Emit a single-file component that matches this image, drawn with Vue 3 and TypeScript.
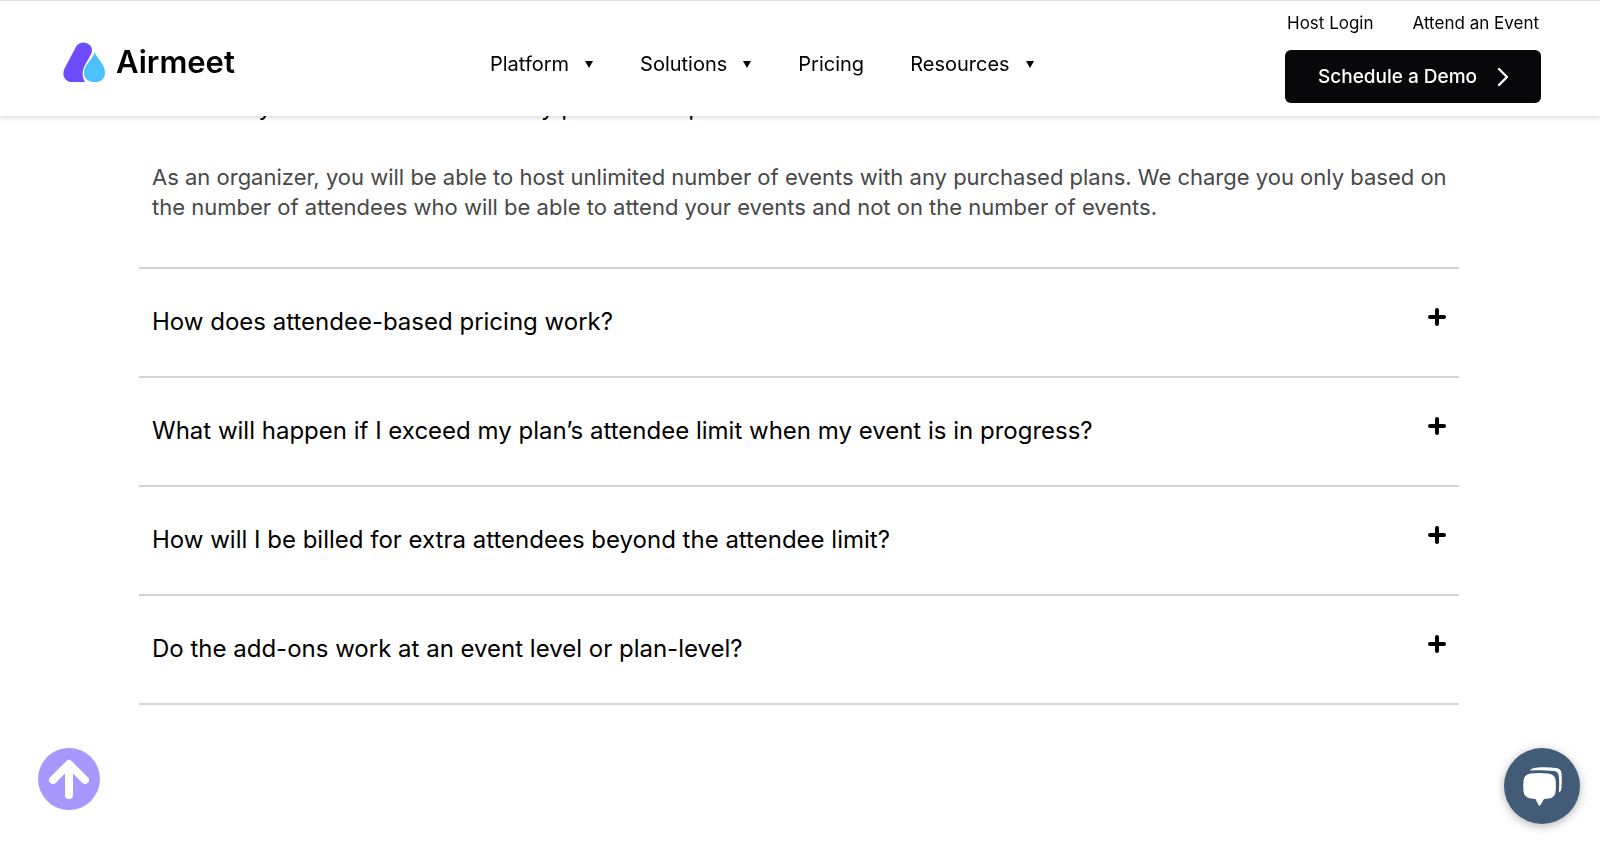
<script setup lang="ts">
import { ref } from 'vue'

interface NavItem { label: string; menu: boolean }
interface Faq { id: string; question: string; answer: string }

const nav: NavItem[] = [
  { label: 'Platform', menu: true },
  { label: 'Solutions', menu: true },
  { label: 'Pricing', menu: false },
  { label: 'Resources', menu: true },
]

const faqs: Faq[] = [
  {
    id: 'events',
    question: 'How many events can I run with my purchased plan?',
    answer:
      'As an organizer, you will be able to host unlimited number of events with any purchased plans. We charge you only based on the number of attendees who will be able to attend your events and not on the number of events.',
  },
  { id: 'pricing', question: 'How does attendee-based pricing work?', answer: '' },
  { id: 'exceed', question: 'What will happen if I exceed my plan’s attendee limit when my event is in progress?', answer: '' },
  { id: 'billing', question: 'How will I be billed for extra attendees beyond the attendee limit?', answer: '' },
  { id: 'addons', question: 'Do the add-ons work at an event level or plan-level?', answer: '' },
]

const openId = ref<string>('events')

function toggle(faq: Faq): void {
  if (faq.answer) openId.value = openId.value === faq.id ? '' : faq.id
}

function scrollToTop(): void {
  window.scrollTo({ top: 0, behavior: 'smooth' })
}
</script>

<template>
  <div class="page">
    <header class="header">
      <a class="brand" href="#" aria-label="Airmeet">
        <svg class="mark" viewBox="0 0 44 42" aria-hidden="true">
          <path
            d="M13.5 4.6C16 .6 20.5-.5 24.500 1.200C29.500 3.500 31 8.500 28.600 12.600L22 24.500C19.300 29.800 19.500 36 22.500 41H9.500C1.500 41-1.800 33.500 1.800 26.600Z"
            fill="#6d4cff"
          />
          <path
            d="M32.500 10.500C34.500 16.500 43 23 43 31.200C43 37.500 39 41 32.500 41C25.500 41 21.500 37.300 21.500 31.200C21.500 23.500 30 18 32.500 10.500Z"
            fill="#4dc0ff"
          />
        </svg>
        <span class="brand-name">Airmeet</span>
      </a>

      <nav class="nav" aria-label="Main">
        <a v-for="item in nav" :key="item.label" class="nav-link" href="#">
          {{ item.label }}
          <svg v-if="item.menu" class="caret" viewBox="0 0 10 8" aria-hidden="true">
            <path d="M1 1H9L5 8Z" fill="#000" />
          </svg>
        </a>
      </nav>

      <div class="actions">
        <div class="account">
          <a href="#">Host Login</a>
          <a href="#">Attend an Event</a>
        </div>
        <a class="demo" href="#">
          Schedule a Demo
          <svg class="chevron" viewBox="0 0 12 20" aria-hidden="true">
            <path d="M2 2L10 10L2 18" fill="none" stroke="#fff" stroke-width="2.400" stroke-linecap="round" stroke-linejoin="round" />
          </svg>
        </a>
      </div>
    </header>

    <main class="faqs">
      <section v-for="faq in faqs" :key="faq.id" class="faq">
        <h3 class="heading">
          <button
            class="question"
            type="button"
            :aria-expanded="openId === faq.id"
            @click="toggle(faq)"
          >
            <span>{{ faq.question }}</span>
            <svg v-if="openId !== faq.id" class="plus" viewBox="0 0 18 18" aria-hidden="true">
              <path d="M9 2V16M2 9H16" stroke="#000" stroke-width="4" stroke-linecap="round" />
            </svg>
          </button>
        </h3>
        <p v-if="openId === faq.id" class="answer">{{ faq.answer }}</p>
      </section>
    </main>

    <button class="to-top" type="button" aria-label="Back to top" @click="scrollToTop">
      <svg viewBox="0 0 62 62" aria-hidden="true">
        <circle cx="31" cy="31" r="31" fill="#a797ff" />
        <path d="M31 47V17M15 32L31 16L47 32" fill="none" stroke="#fff" stroke-width="8" stroke-linecap="round" stroke-linejoin="round" />
      </svg>
    </button>

    <button class="chat" type="button" aria-label="Open chat">
      <svg viewBox="0 0 76 76" aria-hidden="true">
        <path d="M26 22.500C27.500 20.500 29.500 20 32 19.800C39 19.200 45 19.200 52 20C56 20.500 57.400 22.500 57.600 26C57.900 31 57.900 35 57.400 40C57.100 42.500 56.500 43.700 54.800 44.500C55.400 38 55.400 33.500 54.800 28C54.400 25 53 23.500 50 23.100C42 22.200 35 22.200 26 22.500Z" fill="#fff" />
        <path d="M27 25.500Q35.500 24.600 44 25.500Q51.300 26 51.700 33Q52.100 38 51.700 43Q51.300 49.500 45 50.500L40 51.100L36.500 57Q35.500 58.200 34.500 57L31.500 51.100L27 50.500Q20 50 19.500 43Q19 38 19.500 33Q20 26 27 25.500Z" fill="#fff" />
      </svg>
    </button>
  </div>
</template>

<style>
body {
  margin: 0;
  background: #fff;
}
</style>

<style scoped>
.page {
  min-height: 100vh;
  box-sizing: border-box;
  padding: 91px 2px 0 0;
  font-family: Inter, "Liberation Sans", sans-serif;
  color: #000;
}

a {
  color: inherit;
  text-decoration: none;
}

button {
  font: inherit;
  color: inherit;
  background: none;
  border: 0;
  padding: 0;
  cursor: pointer;
}

.header {
  position: fixed;
  z-index: 2;
  top: 0;
  left: 0;
  right: 0;
  height: 116px;
  box-sizing: border-box;
  padding: 9px 59px 12px 63px;
  display: grid;
  grid-template-columns: 427px 1fr auto;
  align-items: center;
  background: #fff;
  border-top: 1px solid #e0e0e0;
  box-shadow: 0 2px 4px rgba(0, 0, 0, 0.14);
}

.brand {
  display: flex;
  align-items: center;
  gap: 10px;
  padding-top: 10px;
}

.mark {
  width: 43px;
  height: 41px;
}

.brand-name {
  font-size: 31px;
  line-height: 40px;
  font-weight: 600;
}

.nav {
  display: flex;
  gap: 46px;
  padding-top: 14px;
  font-size: 20px;
  line-height: 28px;
}

.nav-link {
  display: flex;
  align-items: center;
  gap: 15px;
}

.caret {
  width: 10px;
  height: 8px;
}

.actions {
  display: flex;
  flex-direction: column;
  gap: 15px;
}

.account {
  display: flex;
  justify-content: space-between;
  padding: 0 2px;
  font-size: 17px;
  line-height: 24px;
}

.demo {
  display: flex;
  align-items: center;
  justify-content: space-between;
  height: 53px;
  width: 256px;
  box-sizing: border-box;
  padding: 0 32px 0 33px;
  border-radius: 6px;
  background: #08080a;
  color: #fff;
  font-size: 19px;
  font-weight: 500;
  white-space: nowrap;
}

.chevron {
  flex: none;
  width: 12px;
  height: 20px;
}

.faqs {
  max-width: 1320px;
  margin: 0 auto;
}

.faq {
  border-bottom: 2px solid #d4d4d4;
}

.heading {
  margin: 0;
  font-weight: 400;
}

.question {
  display: flex;
  justify-content: space-between;
  align-items: flex-start;
  width: 100%;
  padding: 37px 13px 38px;
  font-size: 24px;
  line-height: 32px;
  text-align: left;
}

.plus {
  flex: none;
  width: 18px;
  height: 18px;
  margin-top: 2px;
}

.faq:first-child .question {
  padding: 0 13px;
}

.answer {
  margin: 0;
  padding: 39px 8px 45px 13px;
  font-size: 22px;
  line-height: 30px;
  color: #484848;
}

.to-top,
.chat {
  position: fixed;
  z-index: 3;
  border-radius: 50%;
}

.to-top svg,
.chat svg {
  display: block;
  width: 100%;
}

.to-top {
  left: 38px;
  bottom: 35px;
  width: 62px;
  height: 62px;
}

.chat {
  right: 20px;
  bottom: 21px;
  width: 76px;
  height: 76px;
  background: #425b76;
  box-shadow: 0 2px 10px rgba(0, 0, 0, 0.3);
}
</style>
